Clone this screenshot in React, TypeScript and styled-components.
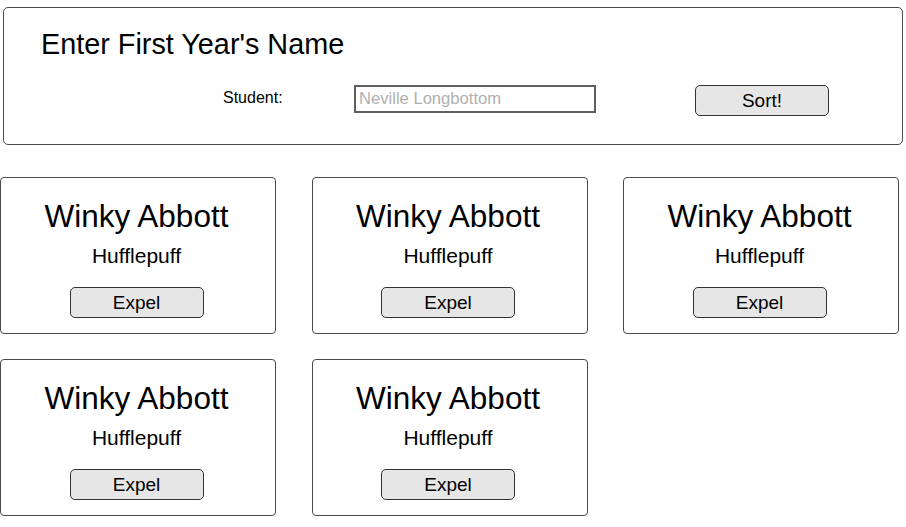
import React from "react";
import styled, { createGlobalStyle } from "styled-components";

const Global = createGlobalStyle`
  html, body {
    margin: 0;
    padding: 0;
    background: #ffffff;
  }
  body {
    font-family: "Liberation Sans", Arial, Helvetica, sans-serif;
    color: #000;
  }
  * { box-sizing: border-box; }
`;

const Page = styled.div`
  width: 906px;
  padding-top: 7px;
`;

const SortPanel = styled.section`
  margin: 0 3px;
  height: 138px;
  border: 1px solid #4a4a4a;
  border-radius: 5px;
  padding: 20px 0 0 37px;
`;

const Title = styled.h1`
  margin: 0;
  font-size: 28.8px;
  font-weight: normal;
  line-height: 32px;
`;

const FormRow = styled.div`
  display: flex;
  align-items: flex-start;
  margin-top: 25px;
  padding-left: 182px;
`;

const Label = styled.label`
  width: 131px;
  margin-top: 4px;
  font-size: 16px;
  line-height: 18px;
`;

const NameInput = styled.input`
  width: 242px;
  height: 28px;
  margin: 0;
  border: 2px solid #5f5f5f;
  border-radius: 0;
  padding: 0 0 0 3px;
  font-family: inherit;
  font-size: 16.6px;
  color: #000;
  outline: none;
  &::placeholder {
    color: #b0b0b0;
  }
`;

const GreyButton = styled.button<{ $offset?: number }>`
  width: 134px;
  height: 31px;
  margin: 0 0 0 ${(p) => p.$offset ?? 0}px;
  padding: 0;
  background: #e6e6e6;
  border: 1px solid #333;
  border-radius: 5px;
  font-family: inherit;
  font-size: 19px;
  color: #000;
  line-height: 1;
`;

const Grid = styled.div`
  margin-top: 32px;
  width: 899px;
  display: grid;
  grid-template-columns: repeat(3, 276px);
  justify-content: space-between;
  row-gap: 25px;
`;

const Card = styled.div`
  height: 157px;
  border: 1px solid #4a4a4a;
  border-radius: 4px;
  padding: 21px 3px 0 0;
  display: flex;
  flex-direction: column;
  align-items: center;
`;

const StudentName = styled.div`
  font-size: 31.5px;
  line-height: 34px;
`;

const House = styled.div`
  margin-top: 11px;
  font-size: 21px;
  line-height: 24px;
`;

const ExpelButton = styled(GreyButton)`
  margin-top: 19px;
`;

const students = [
  { name: "Winky Abbott", house: "Hufflepuff" },
  { name: "Winky Abbott", house: "Hufflepuff" },
  { name: "Winky Abbott", house: "Hufflepuff" },
  { name: "Winky Abbott", house: "Hufflepuff" },
  { name: "Winky Abbott", house: "Hufflepuff" },
];

export default function App() {
  return (
    <>
      <Global />
      <Page>
        <SortPanel>
          <Title>Enter First Year's Name</Title>
          <FormRow>
            <Label htmlFor="student">Student:</Label>
            <NameInput id="student" placeholder="Neville Longbottom" />
            <GreyButton $offset={99}>Sort!</GreyButton>
          </FormRow>
        </SortPanel>
        <Grid>
          {students.map((s, i) => (
            <Card key={i}>
              <StudentName>{s.name}</StudentName>
              <House>{s.house}</House>
              <ExpelButton>Expel</ExpelButton>
            </Card>
          ))}
        </Grid>
      </Page>
    </>
  );
}
